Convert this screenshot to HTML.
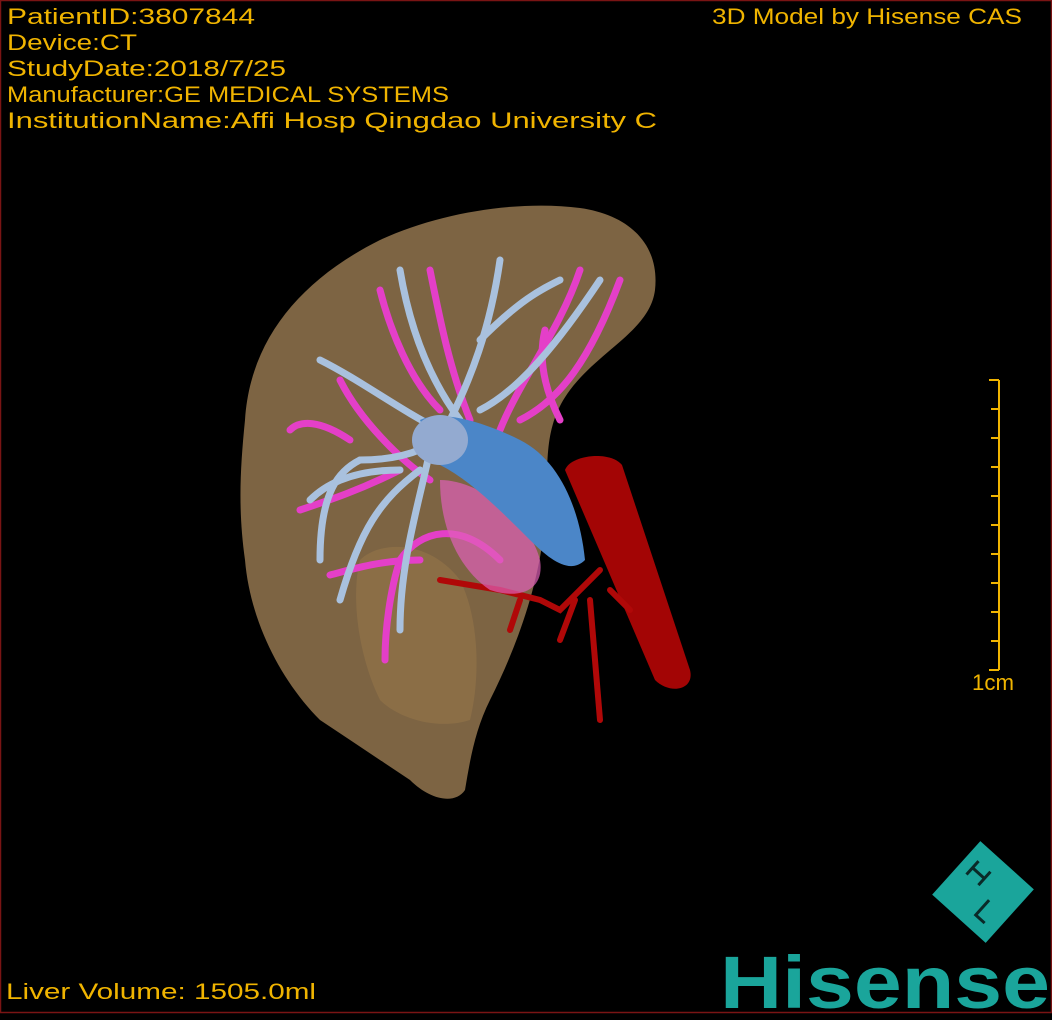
<!DOCTYPE html>
<html><head><style>
html,body{margin:0;padding:0;background:#000;}
svg{display:block}
</style></head><body>
<svg width="1052" height="1020" viewBox="0 0 1052 1020" xmlns="http://www.w3.org/2000/svg">
<rect x="0" y="0" width="1052" height="1020" fill="#000"/>
<rect x="0.5" y="0.5" width="1051" height="1012" fill="none" stroke="#7a1414" stroke-width="1.5"/>
<g font-family="'Liberation Sans', sans-serif" font-size="22" fill="#f0b400">
<text x="7" y="24" textLength="248" lengthAdjust="spacingAndGlyphs">PatientID:3807844</text>
<text x="7" y="50" textLength="130" lengthAdjust="spacingAndGlyphs">Device:CT</text>
<text x="7" y="76" textLength="279" lengthAdjust="spacingAndGlyphs">StudyDate:2018/7/25</text>
<text x="7" y="102" textLength="442" lengthAdjust="spacingAndGlyphs">Manufacturer:GE MEDICAL SYSTEMS</text>
<text x="7" y="128" textLength="650" lengthAdjust="spacingAndGlyphs">InstitutionName:Affi Hosp Qingdao University C</text>
<text x="712" y="24" textLength="310" lengthAdjust="spacingAndGlyphs">3D Model by Hisense CAS</text>
<text x="6" y="999" textLength="310" lengthAdjust="spacingAndGlyphs">Liver Volume: 1505.0ml</text>
<text x="972" y="690" textLength="42" lengthAdjust="spacingAndGlyphs">1cm</text>
</g>
<!-- scale bar -->
<g stroke="#f0b400" stroke-width="2">
<line x1="999" y1="380" x2="999" y2="670"/>
<line x1="989" y1="380" x2="999" y2="380"/>
<line x1="989" y1="670" x2="999" y2="670"/>
<line x1="991" y1="409" x2="999" y2="409"/><line x1="991" y1="438" x2="999" y2="438"/>
<line x1="991" y1="467" x2="999" y2="467"/><line x1="991" y1="496" x2="999" y2="496"/>
<line x1="991" y1="525" x2="999" y2="525"/><line x1="991" y1="554" x2="999" y2="554"/>
<line x1="991" y1="583" x2="999" y2="583"/><line x1="991" y1="612" x2="999" y2="612"/>
<line x1="991" y1="641" x2="999" y2="641"/>
</g>
<!-- liver -->
<path d="M245,420 C250,340 300,280 380,240 C440,212 520,200 580,208 C630,215 660,245 655,290 C650,330 600,350 570,390 C540,430 550,470 545,520 C540,580 520,640 490,700 C475,730 470,760 465,790 C455,805 430,800 410,780 C380,760 350,740 320,720 C280,680 250,620 245,560 C238,510 240,470 245,420 Z" fill="#7d6443"/>
<path d="M360,560 C380,540 430,540 460,580 C480,620 480,680 470,720 C440,730 400,720 380,700 C360,660 350,600 360,560Z" fill="#95744a" opacity="0.6"/>
<!-- red vessel -->
<path d="M565,470 C570,455 610,450 622,465 L690,670 C695,690 670,695 655,680 Z" fill="#a30505"/>
<g stroke="#b00808" stroke-width="6" fill="none" stroke-linecap="round">
<path d="M600,570 L580,590 L560,610 L540,600 L500,590 L440,580"/>
<path d="M590,600 L595,660 L600,720"/>
<path d="M575,600 L560,640"/><path d="M610,590 L630,610"/>
<path d="M520,600 L510,630"/>
</g>
<!-- pink vessels -->
<g stroke="#e43fc8" stroke-width="7" fill="none" stroke-linecap="round">
<path d="M500,560 C460,520 420,530 400,560 C390,590 385,630 385,660"/>
<path d="M430,480 C400,460 360,420 340,380"/>
<path d="M400,470 C360,490 330,500 300,510"/>
<path d="M420,560 C380,560 350,570 330,575"/>
<path d="M500,430 C520,380 560,330 580,270"/>
<path d="M520,420 C560,400 590,360 620,280"/>
<path d="M470,420 C450,370 440,320 430,270"/>
<path d="M440,410 C410,380 390,330 380,290"/>
<path d="M560,420 C540,380 540,350 545,330"/>
<path d="M350,440 C320,420 300,420 290,430"/>
</g>
<!-- pink blob -->
<path d="M440,480 C480,480 530,520 540,560 C545,590 520,600 490,590 C460,570 440,530 440,480Z" fill="#e060b8" opacity="0.7"/>
<!-- light blue vessels -->
<g stroke="#a9c1de" stroke-width="7" fill="none" stroke-linecap="round">
<path d="M450,430 C430,450 400,460 360,460"/>
<path d="M430,450 C420,500 400,560 400,630"/>
<path d="M420,470 C380,500 360,530 340,600"/>
<path d="M450,420 C470,380 490,330 500,260"/>
<path d="M460,420 C430,380 410,330 400,270"/>
<path d="M480,410 C520,390 560,340 600,280"/>
<path d="M440,430 C400,410 360,380 320,360"/>
<path d="M400,470 C360,470 330,480 310,500"/>
<path d="M480,340 C520,300 540,290 560,280"/>
<path d="M360,460 C340,470 320,490 320,560"/>
</g>
<!-- blue IVC -->
<path d="M420,420 C440,410 480,420 520,440 C560,460 580,510 585,560 C570,575 550,560 530,540 C500,510 470,480 440,465 Z" fill="#4b86c8"/>
<ellipse cx="440" cy="440" rx="28" ry="25" fill="#93aad0"/>
<!-- Hisense logo -->
<g transform="translate(983,892) rotate(42)">
<rect x="-36" y="-36" width="72" height="72" fill="#1aa59b"/>
<g stroke="#0a2a28" stroke-width="3" fill="none">
<path d="M-24,-20 L-24,-2 M-8,-20 L-8,-2 M-24,-11 L-8,-11"/>
<path d="M10,2 L10,22 L22,22"/>
</g>
</g>
<text x="720" y="1008" font-family="'Liberation Sans', sans-serif" font-weight="bold" font-size="74" fill="#1aa59b" textLength="330" lengthAdjust="spacingAndGlyphs">Hisense</text>
</svg>
</body></html>
